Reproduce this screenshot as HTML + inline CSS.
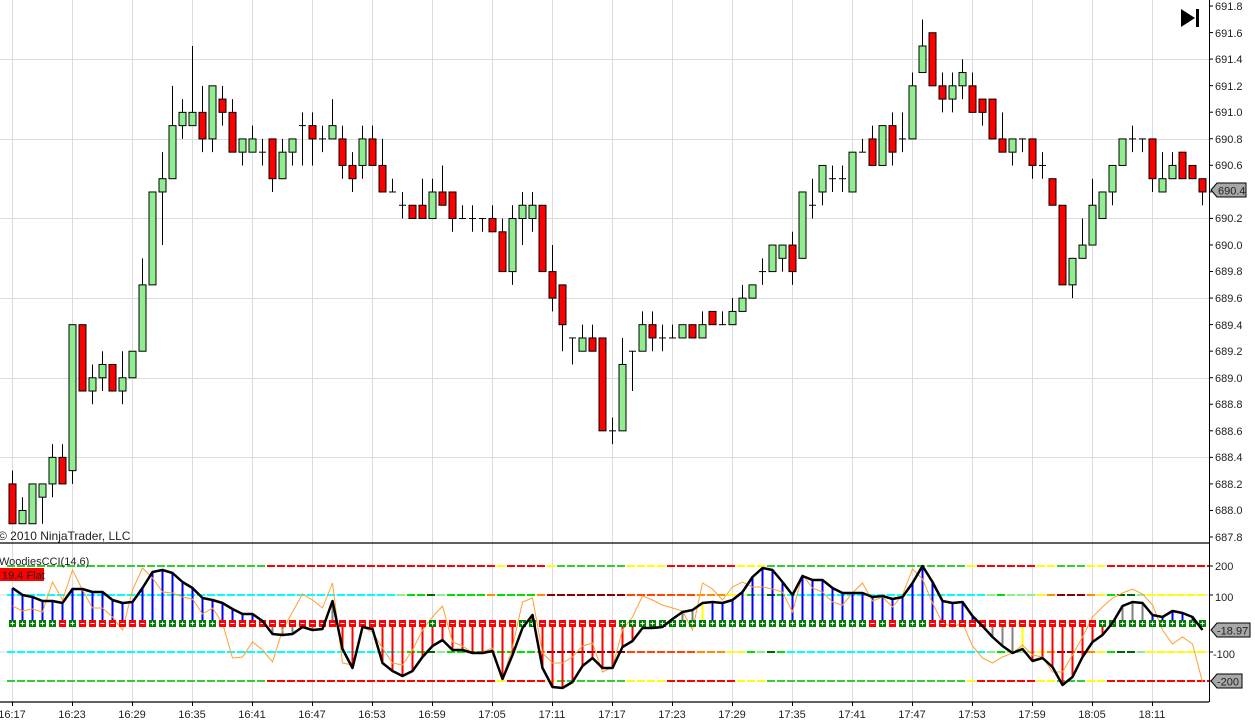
<!DOCTYPE html>
<html><head><meta charset="utf-8"><style>
html,body{margin:0;padding:0;background:#fff;width:1255px;height:724px;overflow:hidden}
svg{position:absolute;left:0;top:0}
text{font-family:"Liberation Sans",sans-serif;font-size:11px;fill:#222}
</style></head><body>
<svg id="s" width="1255" height="724" viewBox="0 0 1255 724" xmlns="http://www.w3.org/2000/svg">
<g id="grid"></g>
<g id="cand"></g>
<g id="ind"></g>
<line x1="0" y1="543" x2="1209" y2="543" stroke="#000" stroke-width="1.2"/>
<line x1="0" y1="702" x2="1209" y2="702" stroke="#000" stroke-width="1.2"/>
<line x1="1209.5" y1="0" x2="1209.5" y2="702" stroke="#000" stroke-width="1"/>
<g id="ticks"></g>
<polygon points="1181,9 1195,18 1181,27" fill="#000"/>
<rect x="1196" y="9" width="3" height="18" fill="#000"/>
<text x="-2" y="540" style="font-size:12px">© 2010 NinjaTrader, LLC</text>
<text x="-1" y="565">WoodiesCCI(14,6)</text>
<rect x="0" y="568" width="44" height="13" fill="#ff0000"/>
<text x="2" y="579">19.4 Flat</text>
<g text-anchor="start">
<text x="1215" y="10">691.8</text><text x="1215" y="37">691.6</text><text x="1215" y="63">691.4</text><text x="1215" y="90">691.2</text><text x="1215" y="116">691.0</text><text x="1215" y="143">690.8</text><text x="1215" y="169">690.6</text><text x="1215" y="222">690.2</text><text x="1215" y="249">690.0</text><text x="1215" y="275">689.8</text><text x="1215" y="302">689.6</text><text x="1215" y="329">689.4</text><text x="1215" y="355">689.2</text><text x="1215" y="382">689.0</text><text x="1215" y="408">688.8</text><text x="1215" y="435">688.6</text><text x="1215" y="461">688.4</text><text x="1215" y="488">688.2</text><text x="1215" y="514">688.0</text><text x="1215" y="541">687.8</text>
</g>
<polygon points="1211,190 1217,183 1246,183 1246,197 1217,197" fill="#a8a8a8" stroke="#000" stroke-width="1"/>
<text x="1218" y="194.5">690.4</text>
<text x="1215" y="570">200</text>
<text x="1215" y="601">100</text>
<text x="1213" y="658">-100</text>
<polygon points="1211,630 1217,623 1250,623 1250,637 1217,637" fill="#a8a8a8" stroke="#000" stroke-width="1"/>
<text x="1217" y="634.5">-18.97</text>
<polygon points="1211,681 1217,674 1242,674 1242,688 1217,688" fill="#a8a8a8" stroke="#000" stroke-width="1"/>
<text x="1217" y="685.5">-200</text>
<g text-anchor="middle">
<text x="12" y="718">16:17</text><text x="72" y="718">16:23</text><text x="132" y="718">16:29</text><text x="192" y="718">16:35</text><text x="252" y="718">16:41</text><text x="312" y="718">16:47</text><text x="372" y="718">16:53</text><text x="432" y="718">16:59</text><text x="492" y="718">17:05</text><text x="552" y="718">17:11</text><text x="612" y="718">17:17</text><text x="672" y="718">17:23</text><text x="732" y="718">17:29</text><text x="792" y="718">17:35</text><text x="852" y="718">17:41</text><text x="912" y="718">17:47</text><text x="972" y="718">17:53</text><text x="1032" y="718">17:59</text><text x="1092" y="718">18:05</text><text x="1152" y="718">18:11</text>
</g>
</svg>
<script>
var NS="http://www.w3.org/2000/svg";
function el(p,t,a){var e=document.createElementNS(NS,t);for(var k in a)e.setAttribute(k,a[k]);document.getElementById(p).appendChild(e);return e;}
for(var j=0;j<20;j++){var x=12+60*j+0.5;el('grid','line',{x1:x,y1:0,x2:x,y2:702,stroke:'#dcdcdc','stroke-width':1});}
[691.4,690.8,690.2,689.6,689.0,688.4].forEach(function(p){var y=Math.round(6+(691.8-p)*132.7)+0.5;el('grid','line',{x1:0,y1:y,x2:1209,y2:y,stroke:'#dcdcdc','stroke-width':1});});
[595,652].forEach(function(y){el('grid','line',{x1:0,y1:y,x2:1209,y2:y,stroke:'#dcdcdc','stroke-width':1});});
for(var i=0;i<=20;i++){var y=6+i*26.55;el('ticks','line',{x1:1209,y1:y,x2:1213,y2:y,stroke:'#000'});}
[566,595,652,681].forEach(function(y){el('ticks','line',{x1:1209,y1:y,x2:1213,y2:y,stroke:'#000'});});
for(var j=0;j<20;j++){var x=12+60*j+0.5;el('ticks','line',{x1:x,y1:702,x2:x,y2:706,stroke:'#000'});}
var C=[[4,5,1,1],[1,3,1,2],[1,4,1,4],[3,4,1,4],[4,7,3,6],[6,7,4,4],[5,16,4,16],[16,16,11,11],[11,13,10,12],[12,14,11,13],
[13,13,11,11],[11,14,10,12],[12,14,12,14],[14,21,14,19],[19,26,19,26],[26,29,22,27],[27,34,27,31],[31,33,30,32],[31,37,31,32],[32,34,29,30],
[30,34,29,34],[33,34,31,32],[32,33,29,29],[29,30,28,30],[29,31,29,30],[29,30,28,29],[30,30,26,27],[27,30,27,29],[29,30,28,30],[31,32,28,31],
[31,32,28,30],[30,31,29,30],[30,33,30,31],[30,31,27,28],[28,29,26,27],[28,31,27,30],[30,31,28,28],[28,30,26,26],[26,27,26,26],[25,26,24,25],
[25,25,24,24],[25,27,24,24],[24,27,24,26],[26,28,25,25],[26,26,23,24],[24,25,24,24],[24,25,23,24],[24,24,23,24],[24,25,23,23],[23,24,20,20],
[20,25,19,24],[24,26,22,25],[24,26,23,25],[25,25,20,20],[20,22,17,18],[19,19,14,16],[15,15,13,15],[14,16,14,15],[15,16,14,14],[15,15,8,8],
[8,9,7,8],[8,15,8,13],[14,14,11,14],[14,17,14,16],[16,17,14,15],[15,16,14,15],[15,16,15,15],[15,16,15,16],[16,16,15,15],[15,17,15,16],
[17,17,16,16],[16,17,16,16],[16,18,16,17],[17,19,17,18],[18,19,18,19],[20,21,19,20],[20,22,20,22],[21,22,20,22],[22,23,19,20],[21,26,21,26],
[25,27,24,25],[26,28,25,28],[27,28,26,27],[27,28,26,27],[26,29,26,29],[29,30,29,29],[30,31,28,28],[28,31,28,31],[31,32,28,29],[30,32,29,30],
[30,35,30,34],[35,39,35,37],[38,38,34,34],[34,35,32,33],[33,35,32,34],[34,36,33,35],[34,35,32,32],[33,33,31,32],[33,33,30,30],[30,32,29,29],
[29,30,28,30],[30,30,29,30],[30,30,27,28],[28,29,27,28],[27,27,25,25],[25,25,19,19],[19,21,18,21],[21,24,21,22],[22,27,22,25],[24,26,24,26],
[26,28,25,28],[28,30,28,30],[30,31,29,30],[30,30,29,30],[30,30,26,27],[26,29,26,27],[27,29,27,28],[29,29,27,27],[28,28,27,27],[27,27,25,26]];
function py(t){return 537-t*13.27;}
C.forEach(function(c,k){var x=12+10*k;var o=c[0],h=c[1],l=c[2],cl=c[3];
el('cand','line',{x1:x+0.5,y1:py(h),x2:x+0.5,y2:py(l),stroke:'#000','stroke-width':1});
if(o==cl){el('cand','line',{x1:x-3,y1:py(o),x2:x+4,y2:py(o),stroke:'#000','stroke-width':1});}
else{var t=Math.max(o,cl),b=Math.min(o,cl);el('cand','rect',{x:x-3,y:py(t),width:7,height:py(b)-py(t),fill:cl>o?'#90ee90':'#ff0000',stroke:'#000','stroke-width':1});}
});
var B=[588,595,597,601,601,603,589,589,592,592,600,603,602,588,572,570,573,582,588,598,600,603,609,614,614,621,634,635,634,627,630,629,601,649,668,627,629,663,671,676,671,657,646,640,650,650,653,653,651,679,655,628,615,668,687,688,682,666,658,668,668,647,641,628,628,627,619,612,610,603,602,603,600,592,577,568,570,582,595,576,580,580,588,593,593,593,597,596,599,597,583,566,582,601,603,602,616,626,637,646,653,649,661,658,667,685,677,657,642,635,623,606,602,603,615,617,611,613,617,630];
var O=[606,611,609,612,582,600,570,590,608,608,617,630,590,568,578,592,593,597,599,614,608,623,658,657,642,650,662,630,612,594,600,608,583,663,665,627,632,648,663,665,650,630,617,606,642,646,653,652,648,679,647,602,598,653,663,663,657,646,643,672,667,630,617,596,600,605,608,611,630,583,589,600,587,582,587,587,589,592,612,575,588,592,602,605,593,583,601,597,607,595,569,579,603,623,627,623,646,658,663,657,653,645,655,657,672,672,655,637,617,607,598,593,589,594,605,630,644,637,644,682];
function rng(a,b,v,arr){for(var i=a;i<=b;i++)arr[i]=v;}
var H=[];rng(0,24,'b',H);rng(25,25,'n',H);rng(26,32,'g',H);rng(33,62,'r',H);rng(63,65,'n',H);rng(66,68,'g',H);rng(69,69,'y',H);rng(70,96,'b',H);rng(97,100,'g',H);rng(101,101,'y',H);rng(102,109,'r',H);rng(110,110,'n',H);rng(111,113,'g',H);rng(114,118,'b',H);rng(119,119,'n',H);
var HC={b:'#0000ff',r:'#ff0000',g:'#808080',y:'#ffff00'};
var M=[];rng(0,119,'G',M);rng(5,5,'R',M);rng(7,13,'R',M);rng(21,41,'R',M);rng(43,50,'R',M);rng(53,60,'R',M);rng(86,86,'R',M);rng(88,88,'R',M);rng(92,108,'R',M);
var G='#32cd32',RD='#ff0000',YE='#ffff00',CY='#00ffff',LG='#90ee90',LI='#00e000',DG='#006400',OR='#ff8c00',DR='#8b0000',ORR='#ff4500';
var L2=[];rng(0,25,G,L2);rng(26,48,RD,L2);rng(49,49,YE,L2);rng(50,53,RD,L2);rng(54,54,YE,L2);rng(55,61,G,L2);rng(62,65,YE,L2);rng(66,72,RD,L2);rng(73,75,YE,L2);rng(76,95,G,L2);rng(96,96,YE,L2);rng(97,102,RD,L2);rng(103,104,YE,L2);rng(105,107,G,L2);rng(108,109,YE,L2);rng(110,119,RD,L2);
var L1=[];rng(0,38,CY,L1);rng(39,39,LG,L1);rng(40,41,LI,L1);rng(42,42,DG,L1);rng(43,43,LG,L1);rng(44,47,LI,L1);rng(48,48,OR,L1);rng(49,52,LI,L1);rng(53,53,OR,L1);rng(54,61,DR,L1);rng(62,68,ORR,L1);rng(69,71,OR,L1);rng(72,73,YE,L1);rng(74,74,LI,L1);rng(75,75,LG,L1);rng(76,76,DG,L1);rng(77,77,LI,L1);rng(78,97,CY,L1);rng(98,98,LG,L1);rng(99,99,LI,L1);rng(100,102,LG,L1);rng(103,103,YE,L1);rng(104,104,OR,L1);rng(105,107,DR,L1);rng(108,108,OR,L1);rng(109,109,YE,L1);rng(110,110,LI,L1);rng(111,112,DG,L1);rng(113,113,LG,L1);rng(114,119,YE,L1);
for(var k=0;k<120;k++){var x=12+10*k;
[566,681].forEach(function(y){el('ind','line',{x1:x-5,y1:y,x2:x+3,y2:y,stroke:L2[k],'stroke-width':2});});
[595,652].forEach(function(y){el('ind','line',{x1:x-5,y1:y,x2:x+3,y2:y,stroke:L1[k],'stroke-width':2});});
}
[566,681].forEach(function(y){el('ind','line',{x1:1207,y1:y,x2:1209,y2:y,stroke:RD,'stroke-width':2});});
for(var k=0;k<120;k++){var x=12+10*k+0.5;if(H[k]!='n')el('ind','line',{x1:x,y1:623,x2:x,y2:B[k],stroke:HC[H[k]],'stroke-width':2});}
var po='',pb='';for(var k=0;k<120;k++){var x=12+10*k+0.5;po+=(k?'L':'M')+x+' '+O[k];pb+=(k?'L':'M')+x+' '+B[k];}
el('ind','path',{d:po,fill:'none',stroke:'#ffa030','stroke-width':1});
for(var k=0;k<120;k++){var x=12+10*k;var g=M[k]=='G';
el('ind','rect',{x:x-3,y:620,width:7,height:7,fill:g?'#008000':'#ff0000'});
el('ind','line',{x1:x-1.5,y1:623.5,x2:x+2.5,y2:623.5,stroke:'#fff','stroke-width':1});
if(g)el('ind','line',{x1:x+0.5,y1:621.5,x2:x+0.5,y2:625.5,stroke:'#fff','stroke-width':1});}
el('ind','path',{d:pb,fill:'none',stroke:'#000','stroke-width':2.5,'stroke-linejoin':'round'});
</script>
</body></html>
